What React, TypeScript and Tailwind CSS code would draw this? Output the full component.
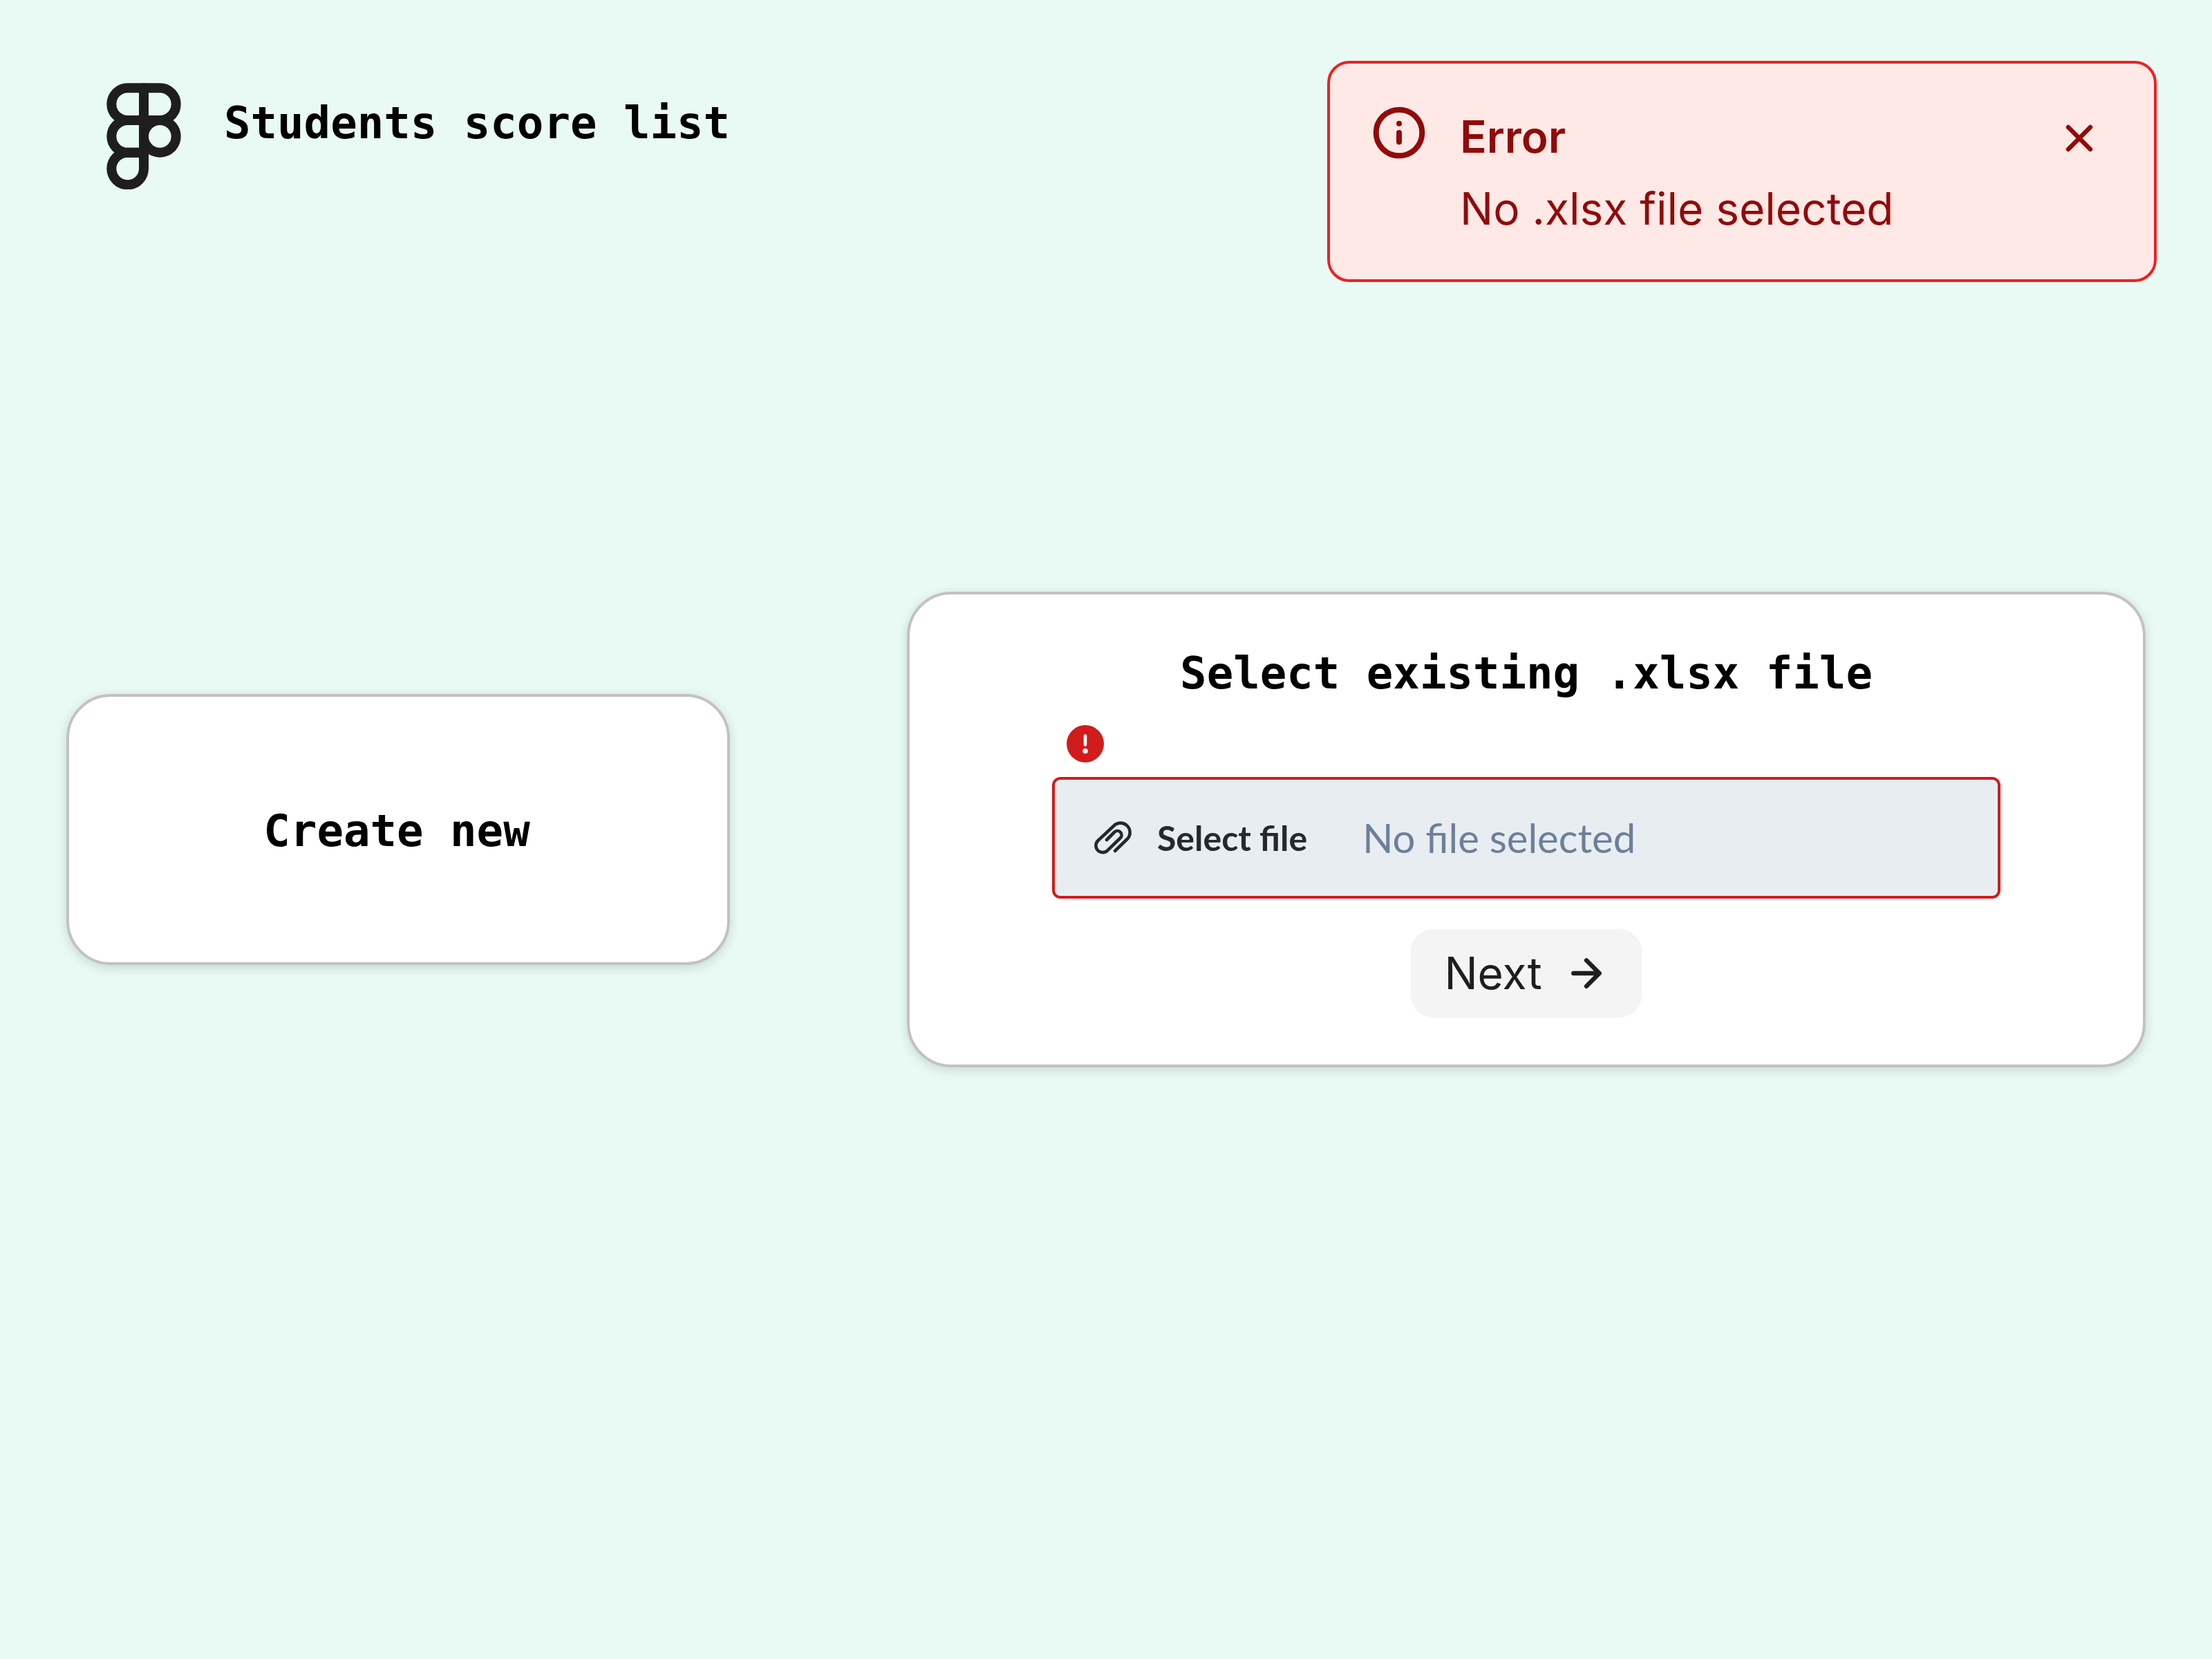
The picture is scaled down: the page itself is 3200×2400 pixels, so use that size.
import { useState } from "react";

const mono = "font-['DejaVu_Sans_Mono','Liberation_Mono',monospace]";

function FigmaLogo() {
  return (
    <svg className="size-40 shrink-0" viewBox="0 0 24 24" fill="none" stroke="#1e1e1e" strokeWidth="2.1" strokeLinecap="round" strokeLinejoin="round" aria-hidden="true">
      <path d="M5 5.5A3.5 3.5 0 0 1 8.5 2H12v7H8.5A3.5 3.5 0 0 1 5 5.5z" />
      <path d="M12 2h3.5a3.5 3.5 0 1 1 0 7H12V2z" />
      <path d="M12 12.5a3.5 3.5 0 1 1 7 0 3.5 3.5 0 1 1-7 0z" />
      <path d="M5 19.5A3.5 3.5 0 0 1 8.5 16H12v3.5a3.5 3.5 0 1 1-7 0z" />
      <path d="M5 12.5A3.5 3.5 0 0 1 8.5 9H12v7H8.5A3.5 3.5 0 0 1 5 12.5z" />
    </svg>
  );
}

function ErrorAlert({ onClose }: { onClose: () => void }) {
  return (
    <div role="alert" className="flex w-[1200px] items-start gap-12 rounded-[32px] border-4 border-[#ec221f] bg-[#fee9e7] p-[60px] pb-[58px] font-['Inter',sans-serif] text-[64px] leading-[88px] text-[#900b09]">
      <svg className="size-20 shrink-0" viewBox="0 0 20 20" fill="none" stroke="currentColor" strokeWidth="2" strokeLinecap="round" aria-hidden="true">
        <circle cx="10" cy="10" r="8.333" />
        <path d="M10 13.333V10M10 6.667h.008" />
      </svg>
      <div className="flex flex-1 flex-col gap-4 pt-0.5">
        <h2 className="font-semibold">Error</h2>
        <p>No .xlsx file selected</p>
      </div>
      <button type="button" aria-label="Close" onClick={onClose} className="cursor-pointer rounded-full p-4">
        <svg className="size-16" viewBox="0 0 16 16" fill="none" stroke="currentColor" strokeWidth="1.6" strokeLinecap="round" aria-hidden="true">
          <path d="M12 4L4 12M4 4l8 8" />
        </svg>
      </button>
    </div>
  );
}

export default function App() {
  const [alertOpen, setAlertOpen] = useState(true);
  const [fileName, setFileName] = useState("");

  return (
    <div className="min-h-screen bg-[#e9faf4] pb-24 text-black">
      <header className="flex h-[408px] items-start justify-between pt-[88px] pr-20 pl-32">
        <div className="flex items-center gap-9 pt-[26px]">
          <FigmaLogo />
          <h1 className={`${mono} pb-8 text-[64px] leading-[84px] font-bold`}>Students score list</h1>
        </div>
        {alertOpen && <ErrorAlert onClose={() => setAlertOpen(false)} />}
      </header>

      <main className="mt-[448px] grid grid-cols-[15fr_28fr] items-center gap-64 px-24">
        <button type="button" className={`${mono} cursor-pointer rounded-[64px] border-4 border-[#c2c2c2] bg-white pt-[152px] pr-1 pb-[148px] text-[64px] leading-[84px] font-bold shadow-[0_4px_16px_rgba(12,12,13,0.15)]`}>
          Create new
        </button>

        <form onSubmit={(e) => e.preventDefault()} className="flex flex-col items-center rounded-[64px] border-4 border-[#c2c2c2] bg-white px-[206px] pt-[72px] pb-[68px] shadow-[0_4px_16px_rgba(12,12,13,0.15)]">
          <h2 className={`${mono} text-[64px] leading-[84px] font-bold`}>Select existing .xlsx file</h2>
          <div className="mt-8 w-full pl-5">
            <svg className="size-14" viewBox="0 0 56 56" role="img" aria-label="Error">
              <circle cx="28" cy="28" r="27" fill="#d21b1b" />
              <path d="M28 16.500v13" stroke="#fff" strokeWidth="4.600" strokeLinecap="round" />
              <circle cx="28" cy="38.500" r="3.800" fill="#fff" />
            </svg>
          </div>
          <label className="mt-5 flex h-44 w-full cursor-pointer items-center rounded-[12px] border-4 border-[#d21b1b] bg-[#e8edf1] pl-14 font-['Lato',sans-serif]">
            <input type="file" accept=".xlsx" className="sr-only" onChange={(e) => setFileName(e.target.files?.[0]?.name ?? "")} />
            <svg className="size-14 shrink-0" viewBox="0 0 56 56" fill="none" stroke="#25292d" strokeWidth="4.6" strokeLinecap="round" strokeLinejoin="round" aria-hidden="true">
              <path d="M31 47L48.500 30A13.600 13.600 0 0 0 29.500 10.500L6.500 32A9.600 9.600 0 0 0 20 46.500L38.500 28.500A6 6 0 0 0 30.500 19.500L19 31" />
            </svg>
            <span className="ml-9 text-[50px] leading-[64px] font-bold text-[#25292d]">Select file</span>
            <span className="ml-20 text-[58px] leading-[72px] text-[#6b809a]">{fileName || "No file selected"}</span>
          </label>
          <button type="submit" className="mt-11 flex h-32 cursor-pointer items-center gap-8 rounded-[32px] bg-[#f4f4f4] px-12 font-['Inter',sans-serif] text-[64px] leading-[64px] text-[#1e1e1e]">
            Next
            <svg className="size-16" viewBox="0 0 16 16" fill="none" stroke="currentColor" strokeWidth="1.6" strokeLinecap="round" strokeLinejoin="round" aria-hidden="true">
              <path d="M3.333 8h9.334M8 3.333L12.667 8 8 12.667" />
            </svg>
          </button>
        </form>
      </main>
    </div>
  );
}
